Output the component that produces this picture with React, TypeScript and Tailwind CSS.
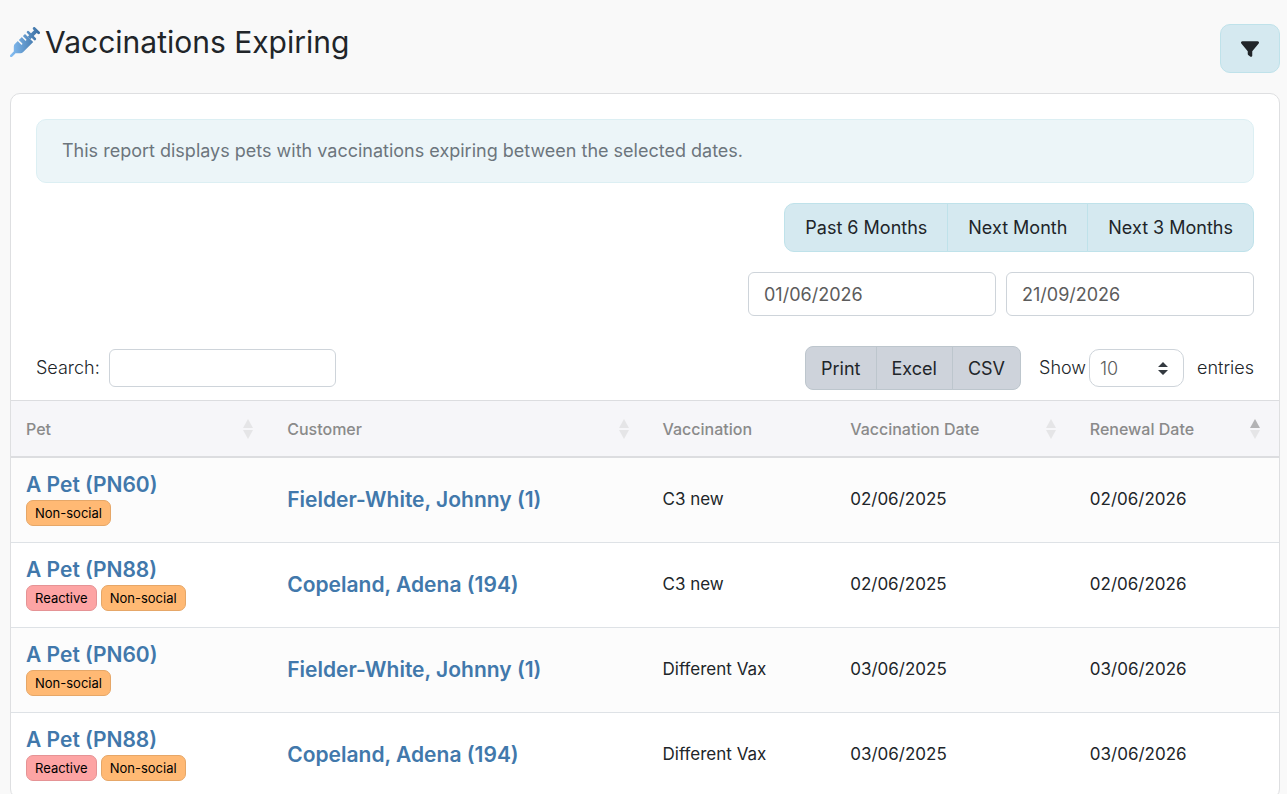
import { clsx } from "clsx";
import { FaFilter } from "react-icons/fa6";

type Tag = "Reactive" | "Non-social";
type SortState = "none" | "both" | "asc";

type Row = {
  pet: string;
  tags: Tag[];
  customer: string;
  vaccination: string;
  vaccinated: string;
  renewal: string;
};

const columns: { label: string; sort: SortState; width: string }[] = [
  { label: "Pet", sort: "both", width: "w-[20.6%]" },
  { label: "Customer", sort: "both", width: "w-[29.6%]" },
  { label: "Vaccination", sort: "none", width: "w-[14.8%]" },
  { label: "Vaccination Date", sort: "both", width: "w-[18.9%]" },
  { label: "Renewal Date", sort: "asc", width: "w-[16.1%]" },
];

const rows: Row[] = [
  {
    pet: "A Pet (PN60)",
    tags: ["Non-social"],
    customer: "Fielder-White, Johnny (1)",
    vaccination: "C3 new",
    vaccinated: "02/06/2025",
    renewal: "02/06/2026",
  },
  {
    pet: "A Pet (PN88)",
    tags: ["Reactive", "Non-social"],
    customer: "Copeland, Adena (194)",
    vaccination: "C3 new",
    vaccinated: "02/06/2025",
    renewal: "02/06/2026",
  },
  {
    pet: "A Pet (PN60)",
    tags: ["Non-social"],
    customer: "Fielder-White, Johnny (1)",
    vaccination: "Different Vax",
    vaccinated: "03/06/2025",
    renewal: "03/06/2026",
  },
  {
    pet: "A Pet (PN88)",
    tags: ["Reactive", "Non-social"],
    customer: "Copeland, Adena (194)",
    vaccination: "Different Vax",
    vaccinated: "03/06/2025",
    renewal: "03/06/2026",
  },
];

const tagColors: Record<Tag, string> = {
  Reactive: "border-[#e59395] bg-[#fda4a4]",
  "Non-social": "border-[#e6a768] bg-[#ffb974]",
};

function SyringeIcon() {
  return (
    <svg viewBox="0 0 30 30" className="size-[30px] shrink-0" fill="none" aria-hidden="true">
      <defs>
        <linearGradient id="syringe" gradientUnits="userSpaceOnUse" x1="0" y1="0" x2="30" y2="0">
          <stop offset="0" stopColor="#87c0f5" />
          <stop offset="1" stopColor="#386c9f" />
        </linearGradient>
      </defs>
      <path d="M15 6.9 L23.2 15.1 L13.2 25.1 Q12 26.3 10.5 26.3 H6 L3.8 24 V19.5 Q3.8 18.1 4.8 17.1 Z" fill="url(#syringe)" />
      <g stroke="url(#syringe)" strokeLinecap="round">
        <path d="M1.2 28.8 L6 24" strokeWidth="2.6" />
        <path d="M18 5.2 L24.8 12" strokeWidth="2.6" />
        <path d="M24.2 1.4 L28.6 5.8" strokeWidth="2.8" />
        <path d="M19 11 L26.6 3.4" strokeWidth="3.8" strokeLinecap="butt" />
      </g>
      {/* graduation marks cut into the barrel */}
      <path d="M8 13.3 L11.6 16.9 M12 9.3 L15.6 12.9" stroke="#f9f9f9" strokeWidth="1.5" strokeLinecap="round" />
    </svg>
  );
}

function SortArrows({ state }: { state: SortState }) {
  if (state === "none") return null;
  return (
    <svg viewBox="0 0 10 20" className="h-5 w-[10px] shrink-0" aria-hidden="true">
      <path d="M5 0 L10 9 H0 Z" fill={state === "asc" ? "#b3b3b5" : "#e5e5e7"} />
      <path d="M0 11 H10 L5 20 Z" fill="#e5e5e7" />
    </svg>
  );
}

function ButtonGroup({ labels, variant }: { labels: string[]; variant: "range" | "export" }) {
  return (
    <div className="flex">
      {labels.map((label) => (
        <button
          key={label}
          type="button"
          className={clsx(
            "-ml-px border text-lg whitespace-nowrap text-[#212529] first:ml-0",
            variant === "range"
              ? "h-[49px] border-[#bfe2ea] bg-[#d5e9f0] px-5 first:rounded-l-[10px] last:rounded-r-[10px]"
              : "h-11 border-[#bdc6cd] bg-[#ced3db] px-[15px] pt-0.5 first:rounded-l-lg last:rounded-r-lg"
          )}
        >
          {label}
        </button>
      ))}
    </div>
  );
}

function DateInput({ label, value }: { label: string; value: string }) {
  return (
    <input
      type="text"
      aria-label={label}
      defaultValue={value}
      className="h-11 w-[248px] rounded-md border border-[#ced4da] bg-white px-[15px] text-lg text-[#5c5c5c]"
    />
  );
}

export default function App() {
  return (
    <div className="min-h-screen bg-[#f9f9f9] pr-[7px] pl-[10px] font-['Inter',sans-serif] text-[#212529]">
      <header className="flex items-start justify-between pt-6 pb-5">
        <h1 className="flex items-center gap-[5px] text-3xl leading-9">
          <SyringeIcon />
          Vaccinations Expiring
        </h1>
        <button
          type="button"
          aria-label="Filter"
          className="flex h-[49px] w-[60px] items-center justify-center rounded-[10px] border border-[#bfe2ea] bg-[#d5e9f0]"
        >
          <FaFilter className="size-[18px]" />
        </button>
      </header>

      <main className="overflow-hidden rounded-[10px] border border-[#dedfe1] bg-white">
        <div className="flex flex-col gap-5 px-[25px] pt-[25px]">
          <p className="rounded-[10px] border border-[#dceff3] bg-[#ecf5f8] px-[25px] py-[18px] text-lg leading-[26px] text-[#6c757d]">
            This report displays pets with vaccinations expiring between the selected dates.
          </p>
          <div className="flex justify-end">
            <ButtonGroup variant="range" labels={["Past 6 Months", "Next Month", "Next 3 Months"]} />
          </div>
          <div className="flex justify-end gap-[10px]">
            <DateInput label="Start date" value="01/06/2026" />
            <DateInput label="End date" value="21/09/2026" />
          </div>
        </div>

        <div className="flex items-center justify-between px-[25px] pt-[30px] pb-[10px] text-lg font-light">
          <label className="flex items-center gap-[9px]">
            Search:
            <input type="search" className="h-[38px] w-[227px] rounded-md border border-[#ced4da] bg-white px-3" />
          </label>
          <div className="flex items-center gap-[18px]">
            <div className="font-normal">
              <ButtonGroup variant="export" labels={["Print", "Excel", "CSV"]} />
            </div>
            <label className="flex items-center gap-[3px]">
              Show
              <span className="relative mr-[10px]">
                <select
                  defaultValue="10"
                  className="block h-[38px] w-[95px] appearance-none rounded-[10px] border border-[#ced4da] bg-white px-[10px] pt-0.5 text-lg text-[#5c5c5c]"
                >
                  <option>10</option>
                  <option>25</option>
                  <option>50</option>
                </select>
                <svg
                  viewBox="0 0 10 13"
                  className="pointer-events-none absolute top-[13px] right-4 h-[13px] w-[10px]"
                  aria-hidden="true"
                >
                  <path d="M5 0 L10 5 H0 Z M0 8 H10 L5 13 Z" fill="#343a40" />
                </svg>
              </span>
              entries
            </label>
          </div>
        </div>

        <table className="w-full table-fixed border-separate border-spacing-0 text-left">
          <thead className="bg-[#f6f6f9]">
            <tr>
              {columns.map((column) => (
                <th
                  key={column.label}
                  className={clsx(
                    "h-[58px] border-t border-b-2 border-[#dcdde0] pr-[19px] pl-[15px] text-base font-medium text-[#8a8a8a]",
                    column.width
                  )}
                >
                  <span className="flex items-center justify-between">
                    {column.label}
                    <SortArrows state={column.sort} />
                  </span>
                </th>
              ))}
            </tr>
          </thead>
          <tbody>
            {rows.map((row, index) => (
              <tr key={index} className="odd:bg-[#fcfcfc] *:h-[85px] *:border-b *:border-[#dee2e6] *:px-[15px]">
                <td className="pt-3 align-top">
                  <a href="#pet" className="block text-[21px] leading-[30px] font-semibold text-[#4178ab]">
                    {row.pet}
                  </a>
                  <div className="flex gap-1">
                    {row.tags.map((tag) => (
                      <span
                        key={tag}
                        className={clsx(
                          "h-[26px] rounded-[7px] border px-2 text-[13px] leading-6 text-black",
                          tagColors[tag]
                        )}
                      >
                        {tag}
                      </span>
                    ))}
                  </div>
                </td>
                <td>
                  <a href="#customer" className="block text-[21px] leading-[30px] font-semibold text-[#4178ab]">
                    {row.customer}
                  </a>
                </td>
                <td className="text-[17px]">{row.vaccination}</td>
                <td className="text-[17px]">{row.vaccinated}</td>
                <td className="text-[17px]">{row.renewal}</td>
              </tr>
            ))}
          </tbody>
        </table>
      </main>
    </div>
  );
}
